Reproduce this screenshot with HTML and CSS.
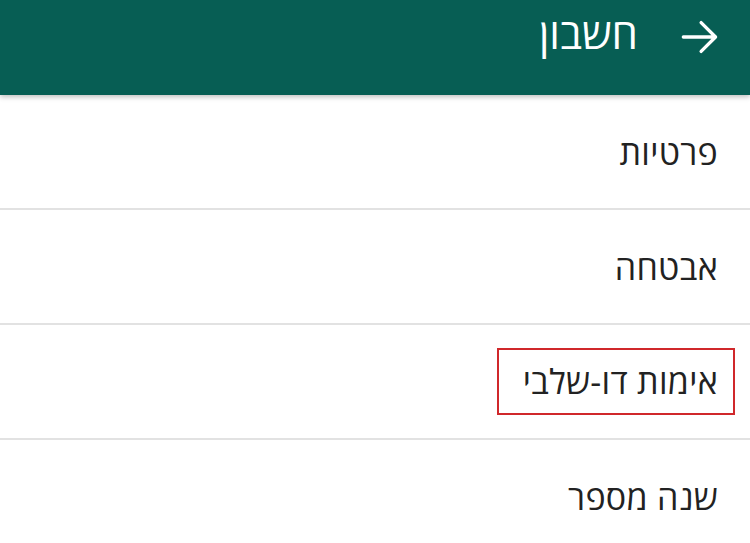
FILE: index.html
```html
<!DOCTYPE html>
<html lang="he" dir="rtl">
<head>
<meta charset="utf-8">
<link rel="stylesheet" href="styles.css">
</head>
<body>
<header class="appbar">
  <svg class="back" viewBox="0 0 36 36" width="40" height="40" aria-hidden="true">
    <path d="M3 18 H32 M19 5 L32 18 L19 31" fill="none" stroke="#fff" stroke-width="3" stroke-linecap="round" stroke-linejoin="round"/>
  </svg>
  <h1 class="title">חשבון</h1>
</header>
<ul class="list">
  <li class="item">פרטיות</li>
  <li class="item">אבטחה</li>
  <li class="item"><span class="mark">אימות דו-שלבי</span></li>
  <li class="item">שנה מספר</li>
</ul>
</body>
</html>
```
FILE: styles.css
```css
html, body {
  margin: 0;
  padding: 0;
  background: #ffffff;
  font-family: "Open Sans", "DejaVu Sans", sans-serif;
  overflow: hidden;
}
.appbar {
  height: 95px;
  background: #075e54;
  display: flex;
  align-items: center;
  padding: 0 30px 0 0;
  gap: 42px;
  box-shadow: 0 2px 5px rgba(0,0,0,0.25);
  position: relative;
  z-index: 1;
}
.back {
  display: block;
  margin-top: -22px;
}
.title {
  margin: 0;
  color: #ffffff;
  font-weight: 400;
  font-size: 42px;
  margin-top: -30px;
}
.list {
  list-style: none;
  margin: 0;
  padding: 0;
}
.item {
  height: 113px;
  border-bottom: 2px solid #e2e2e2;
  display: flex;
  align-items: center;
  padding-right: 32px;
  font-size: 34px;
  letter-spacing: 0.3px;
  color: #222222;
}
.mark {
  border: 2px solid #d0282b;
  padding: 6px 15px 7px 24px;
  margin-right: -17px;
  line-height: 50px;
}
```
